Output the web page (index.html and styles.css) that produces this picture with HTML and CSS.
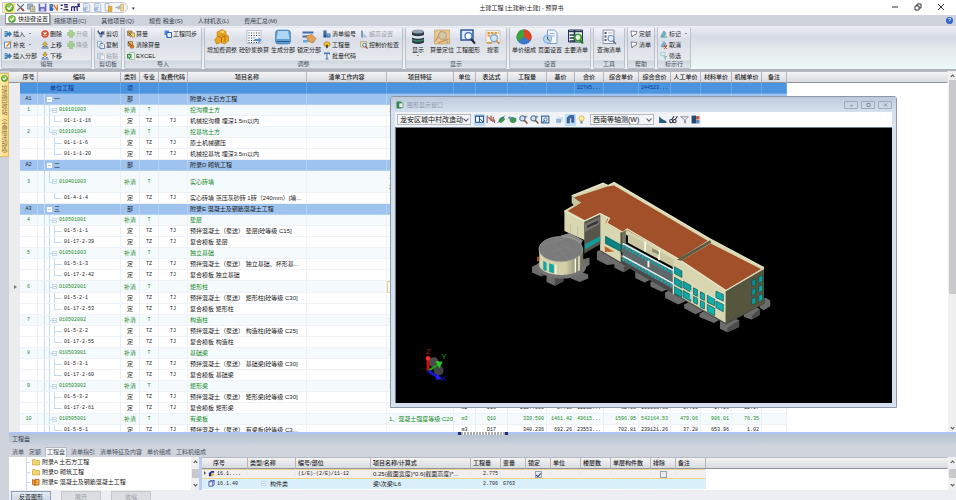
FILE: index.html
```html
<!DOCTYPE html>
<html lang="zh-CN">
<head>
  <meta charset="UTF-8">
  <meta name="viewport" content="width=device-width, initial-scale=1.0">
  <title>土建工程 [土建新\土建] - 预算书</title>
  <link rel="stylesheet" href="styles.css">
  <script src="grid.js" defer></script>
</head>
<body>
<!-- icon sprite -->
<svg class="sprite" aria-hidden="true">
  <symbol id="i-ok" viewBox="0 0 16 16"><circle cx="8" cy="8" r="7.5" fill="#4a9a2c"/><circle cx="8" cy="7" r="5.5" fill="#8cc850"/><path d="M4 8l3 3 5-6" fill="none" stroke="#fff" stroke-width="2.4"/></symbol>
  <symbol id="i-tools" viewBox="0 0 16 16"><path d="M2 2l12 12M14 2L2 14" stroke="#66707c" stroke-width="2.4"/><path d="M9 9l5 5" stroke="#b0483c" stroke-width="3"/></symbol>
  <symbol id="i-pages" viewBox="0 0 16 16"><path d="M1 2h9v9H1z" fill="#9fb9d6" stroke="#54708f"/><path d="M6 6h8v9H6z" fill="#f1e2b0" stroke="#7c6a3a"/><path d="M8 9h5M8 12h5" stroke="#3a6fb0"/></symbol>
  <symbol id="i-save" viewBox="0 0 16 16"><path d="M1 1h14v14H1z" fill="#6a70c8"/><path d="M4 1h8v6H4z" fill="#f4f5ff"/><path d="M5 10h6v5H5z" fill="#c9cdee"/></symbol>
  <symbol id="i-sum" viewBox="0 0 16 16"><path d="M1 2h6v12H1z" fill="#2e5fb0"/><path d="M8 3l7 10M15 3v11" stroke="#d07a2c" stroke-width="2.4"/><path d="M3 4l7 8" stroke="#7fb2e8" stroke-width="2"/></symbol>
  <symbol id="i-dots" viewBox="0 0 16 16"><path d="M1 4h4M7 3h7M1 10h3M6 12h9M8 7h6" stroke="#3a2f6a" stroke-width="2.6"/></symbol>
  <symbol id="i-m2" viewBox="0 0 16 16"><path d="M1 14V6M1 8q3-3 5 0v6M6 8q3-3 5 0v6M11 2h4l-3 4h4" fill="none" stroke="#26287e" stroke-width="2.2"/></symbol>
  <symbol id="i-doc" viewBox="0 0 16 16"><path d="M3 1h8l3 3v11H3z" fill="#eef4fc" stroke="#7f9cc4"/><path d="M5 5h6M5 8h6M5 11h6" stroke="#8aa6cc"/><circle cx="5" cy="11" r="3.4" fill="#9fb8d8"/></symbol>
  <symbol id="i-gold" viewBox="0 0 16 16"><path d="M2 1h7v13H2z" fill="#eef2f8" stroke="#8b96a8"/><path d="M8 6h6v9H8z" fill="#f0b52a" stroke="#b87c10"/></symbol>
  <symbol id="i-exit" viewBox="0 0 16 16"><path d="M10 2h5v12h-5z" fill="#f3d68a" stroke="#c2a04c"/><path d="M1 8h7M6 5l3 3-3 3" fill="none" stroke="#a6b2c6" stroke-width="2.4"/></symbol>
  <symbol id="i-insert" viewBox="0 0 16 16"><path d="M1 2h6v12H1z" fill="#5c88b8"/><path d="M5 5h5V2l6 6-6 6v-3H5z" fill="#2f7bc0"/><path d="M1 5h5M1 9h4" stroke="#dbe9f7"/></symbol>
  <symbol id="i-edit" viewBox="0 0 16 16"><path d="M1 2h12v12H1z" fill="#f8fbff" stroke="#3c6a9c" stroke-width="1.5"/><path d="M5 11L14 1" stroke="#d98b2b" stroke-width="3"/></symbol>
  <symbol id="i-del" viewBox="0 0 16 16"><circle cx="8" cy="8" r="7.5" fill="#d8502c"/><path d="M5 5l6 6M11 5l-6 6" stroke="#fff" stroke-width="2.4"/></symbol>
  <symbol id="i-up" viewBox="0 0 16 16"><path d="M8 1l5 6h-3v4H6V7H3z" fill="#e0b348" stroke="#8a6a2c"/><path d="M1 14h14M3 11h3M10 11h3" stroke="#3a6cab" stroke-width="2.2"/></symbol>
  <symbol id="i-down" viewBox="0 0 16 16"><path d="M8 10L3 5h3V1h4v4h3z" fill="#e0b348" stroke="#8a6a2c"/><path d="M1 14h14M3 11h3M10 11h3" stroke="#3a6cab" stroke-width="2.2"/></symbol>
  <symbol id="i-plus" viewBox="0 0 16 16"><path d="M5 1h6v4h4v6h-4v4H5v-4H1V5h4z" fill="#a5cf90" stroke="#86b872"/></symbol>
  <symbol id="i-cut" viewBox="0 0 16 16"><path d="M2 1l3 8M1 3l8 6" stroke="#3e5874" stroke-width="2.2"/><circle cx="11" cy="6" r="3.4" fill="#2c4a6c"/><circle cx="8" cy="12" r="3" fill="#5f86b2"/><path d="M14 2v8" stroke="#88a" stroke-width="2"/></symbol>
  <symbol id="i-copy" viewBox="0 0 16 16"><path d="M1 1h8v11H1z" fill="#eef4fb" stroke="#4a76ac"/><path d="M6 5h6l3 3v7H6z" fill="#fff" stroke="#3b68a4" stroke-width="1.5"/><path d="M8 9h4M8 12h5" stroke="#6b93c6"/></symbol>
  <symbol id="i-paste" viewBox="0 0 16 16"><path d="M1 2h10v12H1z" fill="#c7d4e2" stroke="#9db2c6"/><path d="M7 6h8v9H7z" fill="#eef4f9" stroke="#a5b6c9"/></symbol>
  <symbol id="i-calc" viewBox="0 0 16 16"><path d="M1 2h9v9H1z" fill="#e9a33b" stroke="#5b4a32"/><path d="M6 6h9v8H6z" fill="#f7d46c" stroke="#7a5a20"/><path d="M3 5l6 6" stroke="#35557e" stroke-width="2"/></symbol>
  <symbol id="i-clear" viewBox="0 0 16 16"><path d="M2 1h9v9H2z" fill="#f0a83a" stroke="#6a4a1a"/><circle cx="10" cy="11" r="4.4" fill="#c8742a"/><path d="M2 2l6 7" stroke="#31425c" stroke-width="2"/></symbol>
  <symbol id="i-excel" viewBox="0 0 16 16"><path d="M5 1h10v14H5z" fill="#eef8ea" stroke="#6a9a5c"/><path d="M0 4h9v9H0z" fill="#2f8a3a"/><path d="M2 6l5 5M7 6l-5 5" stroke="#fff" stroke-width="1.6"/></symbol>
  <symbol id="i-sync" viewBox="0 0 16 16"><path d="M1 1h9v9H1z" fill="#4d86d6"/><path d="M6 5h9v10H6z" fill="#f1f7ff" stroke="#2f66bc" stroke-width="2"/><path d="M4 13l4 2-3-5z" fill="#2f66bc"/></symbol>
  <symbol id="i-num" viewBox="0 0 16 16"><path d="M1 1h6v14H1z" fill="#1f4e86"/><path d="M7 7h8v8H7z" fill="#3d78b8"/><path d="M3 4h2M3 8h2M9 10h4" stroke="#e7f1fb" stroke-width="1.5"/></symbol>
  <symbol id="i-qty" viewBox="0 0 16 16"><path d="M8 1l6 3v5l-6 3-6-3V4z" fill="#f3c233" stroke="#7b5c10"/><path d="M6 8v7l4-2V7z" fill="#5a4a2a"/></symbol>
  <symbol id="i-text" viewBox="0 0 16 16"><path d="M2 1h12v4h-2V4H9v9h2v2H5v-2h2V4H4v1H2z" fill="#3f79b8"/></symbol>
  <symbol id="i-limit" viewBox="0 0 16 16"><path d="M2 1h4v14H2z" fill="#7f9dbd"/><path d="M7 6l7 9H7z" fill="#a7bcd2"/></symbol>
  <symbol id="i-check" viewBox="0 0 16 16"><path d="M1 1h12v11H1z" fill="#f4e3b6" stroke="#9a8050"/><circle cx="9" cy="8" r="3.6" fill="#dcecfa" stroke="#3a6aa4" stroke-width="1.6"/><path d="M11 11l4 4" stroke="#b04c2c" stroke-width="2.4"/></symbol>
  <symbol id="i-book" viewBox="0 0 16 16"><path d="M2 2l12 1-2 6-5 1-3 4-1-5z" fill="#fff" stroke="#4c5462" stroke-width="1.4"/></symbol>
  <symbol id="i-mark" viewBox="0 0 16 16"><path d="M2 12L8 2l4 5-4 6z" fill="#6fb3c4" stroke="#3a7f96"/><path d="M1 14h13" stroke="#5aa0a8" stroke-width="2.4"/></symbol>
  <symbol id="i-unmark" viewBox="0 0 16 16"><path d="M2 11L8 1l4 5-4 6z" fill="#7fb6cc" stroke="#3a7f96"/><path d="M8 9l6 6M14 9l-6 6" stroke="#cc3a2c" stroke-width="2.2"/></symbol>
  <symbol id="i-filter" viewBox="0 0 16 16"><path d="M1 1h9v6H1z" fill="#d8ecf0" stroke="#89b4be"/><path d="M6 8h9l-3 3v4h-3v-4z" fill="#8ac2cc"/></symbol>
  <symbol id="b-cubes" viewBox="0 0 32 32"><path d="M16 1l8 4v6l5 3v10l-8 6-7-3-9 3-4-9 5-4V6z" fill="#eba520" stroke="#a46a08"/><path d="M8 14l7 3v9M15 17l7-4M22 13v12M16 6v7" fill="none" stroke="#b0700c" stroke-width="2"/><path d="M12 5l6-2 4 3-6 3z" fill="#ffdb73"/></symbol>
  <symbol id="b-table" viewBox="0 0 32 32"><path d="M2 3h28v26H2z" fill="#fafcff" stroke="#8a93a6"/><path d="M5 8h22M5 13h22M5 18h12M5 23h12M5 27h22" stroke="#33415e" stroke-width="2" stroke-dasharray="2 3"/><path d="M17 20h8v-4l6 6-6 6v-4h-8z" fill="#4a8fe0"/></symbol>
  <symbol id="b-box" viewBox="0 0 32 32"><rect x="1" y="2" width="30" height="28" rx="6" fill="#5b9fd6" stroke="#2a5f96"/><path d="M6 4h20l3 16H3z" fill="#b0d6f2"/><path d="M3 25h26" stroke="#26588c" stroke-width="2"/></symbol>
  <symbol id="b-lock" viewBox="0 0 32 32"><path d="M3 5h22v4H3zM3 13h14v4H3z" fill="#3e6fae"/><path d="M10 14l12-3 8 8-6 9-9-3z" fill="#e2a05a" stroke="#a0622a"/><path d="M4 22h10v5H4z" fill="#6aaadc"/></symbol>
  <symbol id="b-barrel" viewBox="0 0 32 32"><path d="M4 5h24v22q-12 6-24 0z" fill="#2e3a44"/><ellipse cx="16" cy="5" rx="12" ry="4" fill="#8fa0ac"/><path d="M4 12q12 5 24 0v5q-12 5-24 0z" fill="#dfe9ee"/><path d="M4 20q12 5 24 0v3q-12 5-24 0z" fill="#2f8a6c"/></symbol>
  <symbol id="b-map" viewBox="0 0 32 32"><path d="M1 2h30v28H1z" fill="#e9c78e" stroke="#a98a58"/><path d="M3 24L14 4M8 28L29 20" stroke="#d07c3a" stroke-width="2"/><circle cx="17" cy="13" r="8" fill="#cfc6b4" fill-opacity=".8" stroke="#b3a184" stroke-width="2"/><path d="M22 20l6 8" stroke="#b3a184" stroke-width="3"/></symbol>
  <symbol id="b-find" viewBox="0 0 32 32"><path d="M2 2h24v20H2z" fill="#dcebf8" stroke="#2e5b96" stroke-width="3"/><circle cx="17" cy="14" r="7" fill="#f4faff" stroke="#3c6faa" stroke-width="2.5"/><path d="M22 20l8 9" stroke="#202a3a" stroke-width="4"/></symbol>
  <symbol id="b-seek" viewBox="0 0 32 32"><path d="M2 3h28v24H2z" fill="#f7efe2" stroke="#b9a98c"/><path d="M5 8h22M5 13h8" stroke="#e39a3c" stroke-width="4" stroke-dasharray="5 2"/><circle cx="18" cy="18" r="7" fill="#cfe4f7" stroke="#7aa3cf" stroke-width="2.5"/><path d="M23 23l6 7M4 28h10" stroke="#d98a30" stroke-width="3"/></symbol>
  <symbol id="b-pie" viewBox="0 0 32 32"><circle cx="16" cy="16" r="15" fill="#3a78cc"/><path d="M16 16L16 1A15 15 0 0 0 4 25z" fill="#3da23c"/><path d="M16 16V1A15 15 0 0 1 29 24z" fill="#dc4526"/></symbol>
  <symbol id="b-page" viewBox="0 0 32 32"><path d="M11 2h14l5 5v22H11z" fill="#f5f9fe" stroke="#7f9fc8" stroke-width="2"/><path d="M15 9h10M15 14h11" stroke="#8db0dc" stroke-width="2"/><circle cx="11" cy="20" r="8" fill="#b9d7f2" stroke="#8ab0da" stroke-width="2.4"/><path d="M11 15v5l4 3" fill="none" stroke="#345" stroke-width="2"/></symbol>
  <symbol id="b-list" viewBox="0 0 32 32"><path d="M1 2h28v24H1z" fill="#fff" stroke="#1f3552" stroke-width="2"/><path d="M1 5h28M3 12h10M3 18h10M3 24h10M13 2v24" stroke="#1f3552" stroke-width="3.4"/><circle cx="20" cy="17" r="6.5" fill="#e4f6dc" stroke="#3c9a34" stroke-width="3.4"/><path d="M24 22l6 7" stroke="#2c7a28" stroke-width="4"/></symbol>
  <symbol id="b-query" viewBox="0 0 32 32"><path d="M4 2h22v27H4z" fill="#f4f6f9" stroke="#8a94a4" stroke-width="2"/><path d="M7 8h4M7 15h4M7 22h4" stroke="#4b5a70" stroke-width="4"/><path d="M14 8h9M14 13h6" stroke="#b0b9c6" stroke-width="2"/><circle cx="20" cy="19" r="6" fill="#dfeefa" stroke="#7797b8" stroke-width="2.4"/><path d="M24 24l6 6" stroke="#59708c" stroke-width="3"/></symbol>
  <symbol id="v-pane" viewBox="0 0 16 16"><path d="M1 2h14v11H1zM8 2v11" fill="#f2f8ff" stroke="#27518a" stroke-width="1.8"/><path d="M9 7l5 5" stroke="#333" stroke-width="1.6"/></symbol>
  <symbol id="v-move" viewBox="0 0 16 16"><path d="M2 1v13M9 1v8h6v5" fill="none" stroke="#8a5a5a" stroke-width="2"/><path d="M4 4l9 8M13 3v5" stroke="#c0504a" stroke-width="2.2"/></symbol>
  <symbol id="v-orbit" viewBox="0 0 16 16"><path d="M3 10q1-7 9-7l2 4q-3 7-9 7z" fill="#3f9a44"/><path d="M1 14L14 1" stroke="#365c9a" stroke-width="1.6"/></symbol>
  <symbol id="v-globe" viewBox="0 0 16 16"><ellipse cx="9" cy="9" rx="6" ry="5" fill="#3c9650"/><path d="M1 5h9M1 5l3-3M1 5l3 3" fill="none" stroke="#4872b0" stroke-width="1.6"/></symbol>
  <symbol id="v-zoom" viewBox="0 0 16 16"><circle cx="6" cy="6" r="4.6" fill="#cfe2f4" stroke="#4c6c94" stroke-width="1.8"/><path d="M9 9l6 6" stroke="#7a4a2a" stroke-width="2.4"/><path d="M12 1v5M10 3h5" stroke="#456"/></symbol>
  <symbol id="v-fit" viewBox="0 0 16 16"><path d="M1 2h13v12H1z" fill="#e4eff9" stroke="#3e6a9c" stroke-width="2"/><circle cx="8" cy="8" r="3" fill="#fff" stroke="#3e6a9c" stroke-width="1.6"/><path d="M3 13l4-4" stroke="#3e6a9c" stroke-width="2"/></symbol>
  <symbol id="v-cube" viewBox="0 0 16 16"><path d="M2 7h9v7H2z" fill="#8fb4d8"/><path d="M2 7l3-3h9v7l-3 3V7z" fill="#c9deef"/></symbol>
  <symbol id="v-solid" viewBox="0 0 16 16"><path d="M2 5l4-4h8v12h-4V5H6v9H2z" fill="#3a68a6" stroke="#1f3f70"/></symbol>
  <symbol id="v-bulb" viewBox="0 0 16 16"><circle cx="8" cy="6" r="4.6" fill="#ffefa0" stroke="#b49a3a"/><path d="M6 11h4v4H6z" fill="#7d7d88"/></symbol>
  <symbol id="v-hill" viewBox="0 0 16 16"><path d="M2 2l5 5 8 4v3H2z" fill="#2a5c7e"/></symbol>
  <symbol id="v-glass" viewBox="0 0 16 16"><path d="M5 8l4-6M11 8l4-6" stroke="#334" stroke-width="1.8"/><circle cx="4" cy="11" r="2.8" fill="none" stroke="#334" stroke-width="1.8"/><circle cx="10" cy="11" r="2.8" fill="none" stroke="#334" stroke-width="1.8"/></symbol>
  <symbol id="v-funnel" viewBox="0 0 16 16"><path d="M1 3h14l-5 5v6H8V8z" fill="#e9edf2" stroke="#7b8794" stroke-width="1.4"/></symbol>
  <symbol id="v-split" viewBox="0 0 16 16"><path d="M1 1h8v14H1z" fill="#234a72"/><path d="M9 2h6v6H9z" fill="#c4583a"/><path d="M9 9h6v6H9z" fill="#5b85b0"/></symbol>
  <symbol id="i-folder" viewBox="0 0 16 16"><path d="M1 3h5l2 2h7v9H1z" fill="#f5d469" stroke="#b98f2c"/></symbol>
  <symbol id="i-openf" viewBox="0 0 16 16"><path d="M1 3l5 2v10l-5-2zM6 3h8v11H6z" fill="#f6b13c" stroke="#b4521c" stroke-width="1.6"/></symbol>
</svg>

<header class="titlebar">
  <div class="qat">
    <button class="hot" aria-label="快捷键设置"><svg><use href="#i-ok"/></svg></button>
    <button aria-label="工具"><svg><use href="#i-tools"/></svg></button>
    <button aria-label="复制页"><svg><use href="#i-pages"/></svg></button>
    <button aria-label="保存"><svg><use href="#i-save"/></svg></button>
    <button aria-label="汇总"><svg><use href="#i-sum"/></svg></button>
    <button aria-label="小数"><svg><use href="#i-dots"/></svg></button>
    <button aria-label="单位"><svg><use href="#i-m2"/></svg></button>
    <button aria-label="文档"><svg><use href="#i-doc"/></svg></button>
    <button aria-label="报表"><svg><use href="#i-doc"/></svg></button>
    <button aria-label="锁定"><svg><use href="#i-gold"/></svg></button>
    <button aria-label="退出"><svg><use href="#i-exit"/></svg></button>
  </div>
  <span class="qat-more">▾</span>
  <h1>土建工程 [土建新\土建] - 预算书</h1>
  <div class="winctl">
    <button aria-label="最小化"><svg viewBox="0 0 8 8"><path d="M1 4h6"/></svg></button>
    <button aria-label="还原"><svg viewBox="0 0 8 8"><path d="M1 3h4v4H1zM3 3V1h4v4H5"/></svg></button>
    <button aria-label="关闭"><svg viewBox="0 0 8 8"><path d="M1 1l6 6M7 1L1 7"/></svg></button>
  </div>
  <div class="tip"><svg><use href="#i-ok"/></svg>快捷键设置</div>
</header>

<nav class="menu">
  <a href="#">措施项目(C)</a>
  <a href="#">其他项目(Q)</a>
  <a href="#">规费 税金(S)</a>
  <a href="#">人材机表(L)</a>
  <a href="#">费用汇总(M)</a>
  <button class="help" aria-label="帮助">?</button>
</nav>

<div class="ribbon">
  <section class="group">
    <div class="tools">
      <div class="col w37">
        <button><svg><use href="#i-insert"/></svg>插入<i class="arr"></i></button>
        <button><svg><use href="#i-edit"/></svg>补充<i class="arr"></i></button>
        <button><svg><use href="#i-insert"/></svg>插入分部</button>
      </div>
      <div class="col w26">
        <button><svg><use href="#i-del"/></svg>删除</button>
        <button><svg><use href="#i-up"/></svg>上移</button>
        <button><svg><use href="#i-down"/></svg>下移</button>
      </div>
      <div class="col w24">
        <button disabled><svg><use href="#i-plus"/></svg>升级</button>
        <button disabled><svg><use href="#i-plus"/></svg>降级</button>
      </div>
    </div>
    <h2>编辑</h2>
  </section>
  <section class="group">
    <div class="tools">
      <div class="col w24">
        <button><svg><use href="#i-cut"/></svg>剪切</button>
        <button><svg><use href="#i-copy"/></svg>复制</button>
        <button disabled><svg><use href="#i-paste"/></svg>粘贴</button>
      </div>
    </div>
    <h2>剪切板</h2>
  </section>
  <section class="group">
    <div class="tools">
      <div class="col w37">
        <button><svg><use href="#i-calc"/></svg>算量</button>
        <button><svg><use href="#i-clear"/></svg>清除算量</button>
        <button><svg><use href="#i-excel"/></svg>EXCEL</button>
      </div>
      <div class="col w37">
        <button><svg><use href="#i-sync"/></svg>工程同步</button>
      </div>
    </div>
    <h2>导入</h2>
  </section>
  <section class="group">
    <div class="tools">
      <button class="big w32"><svg><use href="#b-cubes"/></svg>增加费调整</button>
      <button class="big w32"><svg><use href="#b-table"/></svg>砼砂浆换算</button>
      <button class="big w26"><svg><use href="#b-box"/></svg>生成分部</button>
      <button class="big w26"><svg><use href="#b-lock"/></svg>锁定分部</button>
      <div class="col w37">
        <button><svg><use href="#i-num"/></svg>清单编号</button>
        <button><svg><use href="#i-qty"/></svg>工程量</button>
        <button><svg><use href="#i-text"/></svg>批量代码</button>
      </div>
      <div class="col w42">
        <button disabled><svg><use href="#i-limit"/></svg>超高设置</button>
        <button><svg><use href="#i-check"/></svg>控制价检查</button>
      </div>
    </div>
    <h2>调整</h2>
  </section>
  <section class="group">
    <div class="tools">
      <button class="big w22"><svg><use href="#b-barrel"/></svg>显示<i class="arr"></i></button>
      <button class="big w26"><svg><use href="#b-map"/></svg>算量定位</button>
      <button class="big w26"><svg><use href="#b-find"/></svg>工程图形</button>
      <button class="big w24"><svg><use href="#b-seek"/></svg>搜索</button>
    </div>
    <h2>显示</h2>
  </section>
  <section class="group">
    <div class="tools">
      <button class="big w26"><svg><use href="#b-pie"/></svg>单价组成</button>
      <button class="big w26"><svg><use href="#b-page"/></svg>页面设置</button>
      <button class="big w26"><svg><use href="#b-list"/></svg>主要清单</button>
    </div>
    <h2>设置</h2>
  </section>
  <section class="group">
    <div class="tools">
      <button class="big w28"><svg><use href="#b-query"/></svg>查询清单</button>
    </div>
    <h2>工具</h2>
  </section>
  <section class="group">
    <div class="tools">
      <div class="col w24">
        <button><svg><use href="#i-book"/></svg>定额</button>
        <button><svg><use href="#i-book"/></svg>清单</button>
      </div>
    </div>
    <h2>帮助</h2>
  </section>
  <section class="group">
    <div class="tools">
      <div class="col w30">
        <button><svg><use href="#i-mark"/></svg>标记<i class="arr"></i></button>
        <button><svg><use href="#i-unmark"/></svg>取消</button>
        <button><svg><use href="#i-filter"/></svg>筛选</button>
      </div>
    </div>
    <h2>标示行</h2>
  </section>
</div>

<main class="work">
  <aside class="side">
    <button class="side-tab"><svg><use href="#i-ok"/></svg>垃圾回收站（全屏浮动区）</button>
  </aside>
  <div class="sheet">
    <table class="grid" id="grid">
      <colgroup id="cols"></colgroup>
      <thead><tr id="head"></tr></thead>
      <tbody id="rows"></tbody>
    </table>
  </div>
  <div class="vscroll"><i class="chev up"></i><span class="thumb tall"></span><i class="chev"></i></div>

  <!-- floating 3D view -->
  <section class="viewer">
    <div class="viewer-title">
      <svg viewBox="0 0 16 16"><path d="M1 1h10v14H1z" fill="#2c8a4a"/><path d="M6 4h8v9H6z" fill="#e5f2e8" stroke="#2c6a44"/></svg>
      <span>图形显示窗口</span>
      <button aria-label="最小化"><svg viewBox="0 0 8 8"><path d="M2 5h4"/></svg></button>
      <button aria-label="最大化"><svg viewBox="0 0 8 8"><path d="M2 2h4v4H2z"/></svg></button>
      <button aria-label="关闭"><svg viewBox="0 0 8 8"><path d="M2 2l4 4M6 2L2 6"/></svg></button>
    </div>
    <div class="viewer-bar">
      <label class="pick project"><select aria-label="工程"><option>龙安区城中村改造动</option></select></label>
      <div class="vtools">
        <button class="on" aria-label="窗格"><svg><use href="#v-pane"/></svg></button>
        <button aria-label="平移"><svg><use href="#v-move"/></svg></button>
        <button aria-label="旋转"><svg><use href="#v-orbit"/></svg></button>
        <button aria-label="环绕"><svg><use href="#v-globe"/></svg></button>
        <button aria-label="缩放"><svg><use href="#v-zoom"/></svg></button>
        <button aria-label="放大"><svg><use href="#v-zoom"/></svg></button>
        <button aria-label="全图"><svg><use href="#v-fit"/></svg></button>
      </div>
      <div class="vtools">
        <button aria-label="线框"><svg><use href="#v-cube"/></svg></button>
        <button class="on" aria-label="实体"><svg><use href="#v-solid"/></svg></button>
        <button aria-label="灯光"><svg><use href="#v-bulb"/></svg></button>
      </div>
      <label class="pick view"><select aria-label="视角"><option>西南等轴测(W)</option></select></label>
      <div class="vtools">
        <button aria-label="地形"><svg><use href="#v-hill"/></svg></button>
        <button aria-label="查看"><svg><use href="#v-glass"/></svg></button>
        <button aria-label="过滤"><svg><use href="#v-funnel"/></svg></button>
        <button aria-label="分屏"><svg><use href="#v-split"/></svg></button>
      </div>
    </div>
    <div class="scene">
      <svg viewBox="0 0 1497 831" preserveAspectRatio="xMidYMid meet">
        <defs>
          <linearGradient id="drum"><stop offset="0" stop-color="#d9d6ae"/><stop offset=".6" stop-color="#d2cfa8"/><stop offset="1" stop-color="#6e6c56"/></linearGradient>
          <linearGradient id="glass" x2="1" y2="1"><stop offset="0" stop-color="#0a7f80"/><stop offset="1" stop-color="#12b8b4"/></linearGradient>
        </defs>
        <g transform="translate(378 129)">
          <!-- footings -->
          <g fill="#6c6c6c">
            <path d="M32 290l28-14 26 12v22l-26 10-28-12zM76 316l25-12 26 10v20l-26 14-25-12zM150 316l26-12 26 10v12l-26 10-26-10zM184 268l22-6v22l-22 14z"/>
            <path d="M228 244l30-14 75 40v22l-24 15-28-14v-10l-22 2-31-16zM344 304l24-12 30 16v18l-26 12-28-14zM390 336l24-12 44 24-4 6-30 12-34-16zM434 368l24-12 40 20v18l-24 10-40-20zM492 404l24-12 32 20v12l-22 10-34-18zM538 432l20-12 44 20v8l-20 12-44-18zM600 456l30-16 28 12v20l-36 16-22-10zM672 424l30-16 18 10v18l-24 14-24-8zM722 392l16-8 14 8v18l-20 12-12-8z"/>
          </g>
          <path d="M240 225l378 224 118-62v14l-118 64-378-220z" fill="#4a4a4a"/>
          <path d="M60 276l26 12v22l-26 10zM101 326l26-12v20l-26 14zM622 476l36-24v20l-36 16zM696 438l24-20v18l-24 14zM309 292l24-15v15l-24 15z" fill="#4b4b4b"/>
          <!-- walls -->
          <path d="M152 76l95-38 15 7 18-9 288 169 165 88-115 67v100l-160-92v-98l-140-76-18-8v90l-62-36v-110l-46 20v60l-62-28v-62l48-28-26-16z" fill="#d9d7b1"/>
          <path d="M618 362l115-67v105l-116 60z" fill="#56563f"/>
          <path d="M190 152l48-22v92l-48 28z" fill="#55554a"/>
          <path d="M190 162l46-22v22l-46 24z" fill="#77776f"/><path d="M198 166l34-16v8l-34 16z" fill="#35353a"/>
          <path d="M192 222l46-24v14l-46 26z" fill="#109a9c"/>
          <!-- roofs -->
          <path d="M160 80l100-32 20-3 283 167-88 54-155-86-12 8-54-30 8-16-24-14-46 22-52-28 40-26z" fill="#a2502a"/>
          <path d="M482 272l90-52 152 77-106 64z" fill="#a2502a"/>
          <path d="M152 76l95-38 15 7 18-9 288 169 165 88M130 122l60 30 48-22 28 14-8 14 48 28 14-10 156 92 142 94 115-67" fill="none" stroke="#e6e4c6" stroke-width="4"/>
          <path d="M470 268l100-58 4 8-92 54z" fill="#5b5b44"/>
          <path d="M302 186l14-6v60l-14 8z" fill="#74735a"/><path d="M152 76v22l10 10 18-12z" fill="#c9c7a0"/>
          <!-- corridor -->
          <path d="M305 214l155 86v58l-155-86z" fill="#5f6868"/>
          <path d="M322 190l138 78v24l-138-74z" fill="#c9c8a2"/>
          <path d="M306 220l154 82M306 258l154 84" stroke="#e8f0f0" stroke-width="5"/>
          <path d="M306 228l154 82M306 266l154 84" stroke="#17a0a6" stroke-width="10" stroke-dasharray="7 4"/>
          <path d="M374 214v30M416 240v30M384 272v20" stroke="#f4f4e4" stroke-width="6"/>
          <path d="M395 234l20 10v10l-20-10z" fill="#8d8b68"/>
          <path d="M252 228l28 16-28 2z" fill="#c0602c"/>
          <!-- windows -->
          <g fill="url(#glass)" stroke="#0a4f54" stroke-width="2">
            <path d="M254 198l46 26v20l-46-24zM462 290l23 13v20l-23-13zM462 322l23 13v20l-23-13zM462 350l23 13v20l-23-13zM489 334l23 13v20l-23-13zM489 362l23 13v20l-23-13zM520 354l12 6v20l-12-6zM541 366l12 6v20l-12-6zM520 380l12 6v18l-12-6zM541 392l12 6v20l-12-6zM562 374l22 12v22l-22-10zM562 404l22 12v22l-22-12zM588 364l22 10v20l-22-10zM588 394l22 10v22l-22-12z"/>
            <path d="M696 332l12-6v18l-12 6zM717 322l12-6v18l-12 6zM696 360l12-6v18l-12 6zM717 350l12-6v18l-12 6zM696 388l12-6v18l-12 6zM717 378l12-6v18l-12 6z"/>
          </g>
          <path d="M459 290v84M560 372l54 30M512 362v26" stroke="#eef4ec" stroke-width="3"/>
          <path d="M170 168v42M148 160v34" stroke="#b9b791" stroke-width="2"/>
          <!-- round hall -->
          <ellipse cx="122" cy="290" rx="74" ry="36" fill="#747474"/>
          <path d="M54 240v48q12 26 66 27 56-1 67-31v-50z" fill="url(#drum)"/>
          <path d="M66 272l10 6v26l-10-5zM84 280l14 4v26l-14-4z" fill="#11a5a4"/><path d="M104 284v28M163 262v46M174 258v44" stroke="#f6f6ea" stroke-width="4"/>
          <path d="M50 260v14" stroke="#c0602c" stroke-width="5"/>
          <path d="M118 196l28-8 40 22-10 20z" fill="#8a8a8a"/>
          <ellipse cx="119" cy="237" rx="66" ry="38" fill="#7b7b7b" stroke="#a9a9a0" stroke-width="2"/>
          <path d="M62 224l70-20M86 246l60-18M90 212l50 54M120 222l44 28" stroke="#868686" stroke-width="2"/>
        </g>
        <!-- axis gizmo -->
        <g transform="translate(88 690)">
          <circle cx="25" cy="18" r="15" fill="#4a4a4a"/><circle cx="40" cy="43" r="15" fill="#424242"/>
          <path d="M8 44V10" stroke="#c01414" stroke-width="9"/><circle cx="8" cy="6" r="7" fill="#f03030"/>
          <path d="M12 42l30-20" stroke="#1e9a1e" stroke-width="7"/><path d="M30 14l22 2-10 20z" fill="#2fc42f"/>
          <path d="M8 44l32 20" stroke="#1414c8" stroke-width="9"/><path d="M36 54l16 16-22 0z" fill="#2222ee"/>
          <text x="1" y="-8" fill="#b01818">Z</text><text x="48" y="8" fill="#1fae1f">Y</text><text x="48" y="74" fill="#1818b4">X</text>
        </g>
      </svg>
    </div>
  </section>
</main>

<section class="panel">
  <i class="grip"></i>
  <h2 class="panel-title">工程盘</h2>
  <nav class="tabs">
    <button>清单</button>
    <button>定额</button>
    <button class="active">工程盘</button>
    <button>清单指引</button>
    <button>清单特征及内容</button>
    <button>单价组成</button>
    <button>工料机组成</button>
  </nav>
  <div class="split">
    <ul class="tree">
      <li><svg><use href="#i-folder"/></svg>附录A 土石方工程</li>
      <li><svg><use href="#i-folder"/></svg>附录D 砌筑工程</li>
      <li><svg><use href="#i-openf"/></svg>附录E 混凝土及钢筋混凝土工程</li>
    </ul>
    <div class="vscroll small"><i class="chev up"></i><span class="thumb"></span><i class="chev"></i></div>
    <div class="parts-wrap">
      <table class="parts">
        <colgroup>
          <col class="p46"><col class="p48"><col class="p75"><col class="p100"><col class="p30"><col class="p25"><col class="p25"><col class="p30"><col class="p30"><col class="p40"><col class="p25"><col class="p30"><col>
        </colgroup>
        <thead>
          <tr><th class="first">序号</th><th>类型/名称</th><th>编号/部位</th><th>项目名称/计算式</th><th>工程量</th><th>变量</th><th>锁定</th><th>单位</th><th>楼层数</th><th>单层构件数</th><th>排除</th><th>备注</th><th class="end"></th></tr>
        </thead>
        <tbody>
          <tr class="sel">
            <td class="lat"><i class="mark"></i><svg viewBox="0 0 16 16"><path d="M2 14V7l6-5h6v4H8v8z" fill="#1d2f9c"/><circle cx="11" cy="11" r="3.4" fill="#f0c030"/></svg>16.1....</td>
            <td></td><td class="lat">(1/E)-(2/E)/11-12</td><td>0.25{截面宽度}*0.6{截面高度}*...</td><td class="num lat">2.775</td><td></td>
            <td class="mid"><input type="checkbox" checked aria-label="锁定"></td><td></td><td></td><td></td>
            <td class="mid"><input type="checkbox" aria-label="排除"></td><td></td><td class="end"></td>
          </tr>
          <tr class="alt">
            <td class="lat"><i class="mark none"></i><svg viewBox="0 0 16 16"><path d="M2 4h9v10H2zM2 4l3-3h9v10l-3 3M11 4l3-3" fill="#e9ecff" stroke="#23309a" stroke-width="1.6"/></svg>16.1.40</td>
            <td class="kind"><i class="box"></i>构件类</td><td></td><td>梁\次梁\L6</td><td class="num lat">2.706</td><td class="lat">G763</td>
            <td></td><td></td><td></td><td></td><td></td><td></td><td class="end"></td>
          </tr>
        </tbody>
      </table>
    </div>
    <div class="vscroll small"><i class="chev up"></i><span class="thumb"></span><i class="chev"></i></div>
  </div>
  <div class="actions">
    <button>反查图形</button>
    <button disabled>展开</button>
    <button disabled>收缩</button>
  </div>
</section>
</body>
</html>
```

FILE: styles.css
```css
* { box-sizing: border-box; }
body {
  margin: 0;
  height: 100vh;
  display: flex;
  flex-direction: column;
  overflow: hidden;
  background: #cfd3dc;
  color: #222;
  font: 6px/8px "Liberation Sans", "Noto Sans CJK SC", sans-serif;
}
button {
  border: 0;
  padding: 0;
  background: none;
  color: inherit;
  font: inherit;
  white-space: nowrap;
}
h1, h2 { margin: 0; font: inherit; }
svg { flex: none; display: block; }
.sprite { position: absolute; width: 0; height: 0; }

/* title bar */
.titlebar {
  position: relative;
  display: flex;
  align-items: center;
  height: 15px;
  background: #fff;
}
.qat {
  display: flex;
  align-items: center;
  width: 126px;
  height: 11px;
  margin-left: 2px;
  padding-left: 1px;
  border: 1px solid #c6cad2;
  border-radius: 0 6px 6px 0;
  background: #f3f5f8;
}
.qat button { width: 11px; height: 10px; display: grid; place-items: center; }
.qat svg { width: 9px; height: 9px; }
.qat .hot { background: #fbe18a; }
.qat-more { margin-left: 4px; font-size: 5px; }
.titlebar h1 {
  position: absolute;
  left: 0;
  right: 0;
  padding-left: 87px;
  text-align: center;
  pointer-events: none;
}
.winctl { display: flex; gap: 15px; margin-left: auto; padding: 0 11px 2px 0; }
.winctl svg { width: 8px; height: 8px; fill: none; stroke: #333; stroke-width: 1; }
.tip {
  position: absolute;
  left: 5px;
  top: 13px;
  z-index: 5;
  display: flex;
  align-items: center;
  gap: 2px;
  height: 11px;
  padding: 0 1px 0 2px;
  white-space: nowrap;
  background: #fff;
  border: 1px solid #8f949c;
  box-shadow: 1px 1px 1px #7778;
}
.tip svg { width: 8px; height: 8px; }

/* menu */
.menu {
  display: flex;
  align-items: center;
  gap: 15px;
  height: 11px;
  padding: 0 3px 0 54px;
  background: #cdd2db;
}
.menu a { color: #3c4450; text-decoration: none; }
.help {
  width: 7px;
  height: 7px;
  margin-left: auto;
  border-radius: 50%;
  background: #2e62c4;
  color: #fff;
  line-height: 7px;
}

/* ribbon */
.ribbon {
  display: flex;
  gap: 2px;
  height: 45px;
  padding: 1px 0 0 1px;
  border-bottom: 2px solid #b0b4bc;
  background: linear-gradient(#eceff5, #d6dae5 25%, #e6ebee 60%, #eff8f8);
}
.group {
  display: flex;
  flex-direction: column;
  padding: 0 1px;
  border: 1px solid #bcc1ca;
  border-top-color: #e4e7ed;
  border-radius: 2px;
  background: linear-gradient(#f1f3f8, #dadee8 30%, #e6eaed 80%, #cfd6de 82%, #dfe4ea);
}
.tools { display: flex; flex: 1; }
.group h2 { height: 7px; line-height: 7px; text-align: center; color: #46505e; }
.col { display: flex; flex-direction: column; }
.col button { display: flex; align-items: center; gap: 1px; height: 11px; padding-left: 1px; }
.col svg { width: 8px; height: 8px; }
.ribbon button:disabled { color: #9ba1aa; }
.big { display: flex; flex-direction: column; align-items: center; gap: 1px; padding-top: 1px; }
.big svg { width: 16px; height: 16px; }
.arr {
  margin-left: 3px;
  border: 1px solid transparent;
  border-top-color: #333;
}
.big .arr { margin: 0; }
.w22 { width: 22px; }
.w24 { width: 24px; }
.w26 { width: 26px; }
.w28 { width: 28px; }
.w30 { width: 30px; }
.w32 { width: 32px; }
.w37 { width: 37px; }
.w42 { width: 42px; }

/* work area */
.work {
  position: relative;
  display: flex;
  flex: 1;
  min-height: 0;
}
.side { width: 9px; flex: none; padding-top: 2px; background: #cdd2dc; }
.side-tab {
  display: flex;
  align-items: center;
  gap: 3px;
  width: 9px;
  height: 84px;
  padding-top: 1px;
  border: 1px solid #e0bd62;
  border-left: 0;
  background: linear-gradient(90deg, #fdebb0, #fbd978);
  color: #857645;
  writing-mode: vertical-rl;
}
.side-tab svg { width: 7px; height: 7px; }
.sheet { flex: 1; overflow: hidden; background: linear-gradient(90deg, #ececee 11px, #fff 11px); }
.grid { width: 100%; table-layout: fixed; border-spacing: 0; }
.grid th, .parts th {
  height: 12px;
  padding: 0;
  overflow: hidden;
  white-space: nowrap;
  font-weight: 500;
  color: #222;
  background: linear-gradient(#f4f4f6, #d9dbe0);
  border-top: 1px solid #b6b9c0;
  border-bottom: 1px solid #8e939c;
  border-right: 1px solid #b4b7be;
}
.grid th.gut, .grid th.rest, .parts th.end { border-right-color: transparent; }
.grid td {
  height: 11px;
  padding: 0 2px;
  overflow: hidden;
  white-space: nowrap;
  line-height: 10px;
  border-right: 1px solid #eef2f6;
  border-bottom: 1px solid #eef2f6;
}
.grid td.gut { background: #ececee; border-color: #ececee; }
.grid td.rest { background: #fff; border-color: #fff; }
.grid .c { text-align: center; padding: 0; }
.grid .n { text-align: right; }
.grid .c.n1, .grid .n, .lat { font-family: "Liberation Mono", "Noto Sans CJK SC", monospace; font-size: 5px; }
.unit td { background: #4b94e0; border-color: #69a6e6; color: #0f3596; }
.part td { background: #9dc3ee; border-color: #b2d0f2; }
.item td { background: #f5fafd; color: #178a26; }
.high td { height: 22px; }
.grid .code { padding: 0 0 0 4px; }
.codebox { display: flex; align-items: center; height: 100%; min-height: 10px; }
.high .codebox { min-height: 21px; }
.unit .codebox { padding-left: 6px; }
.code .t { padding-left: 2px; }
.gd { width: 5px; align-self: stretch; margin-bottom: -1px; --ln: #c6dbf0; }
.gd.v { background: linear-gradient(var(--ln), var(--ln)) 2px 0 / 1px 100% no-repeat; }
.gd.tee { background: linear-gradient(var(--ln), var(--ln)) 2px 0 / 1px 100% no-repeat, linear-gradient(var(--ln), var(--ln)) 2px 50% / 3px 1px no-repeat; }
.gd.elb { background: linear-gradient(var(--ln), var(--ln)) 2px 0 / 1px 50% no-repeat, linear-gradient(var(--ln), var(--ln)) 2px 50% / 3px 1px no-repeat; }
.gd.h { background: linear-gradient(var(--ln), var(--ln)) 0 50% / 5px 1px no-repeat; }
.box {
  display: inline-block;
  width: 5px;
  height: 5px;
  border: 1px solid #c6dbf0;
  background: linear-gradient(#b4cfea, #b4cfea) 0 1px / 3px 1px no-repeat #fff;
}
.part .box { border-color: #fff; }
.cur {
  display: block;
  width: 0;
  margin-left: 3px;
  border: 2px solid transparent;
  border-left: 3px solid #777;
}
.grid td.focus { border: 1px solid #e9cf82; }

/* scroll bars */
.vscroll {
  display: flex;
  flex-direction: column;
  justify-content: space-between;
  align-items: center;
  width: 8px;
  flex: none;
  padding: 4px 0 3px;
  background: #f0f0f1;
}
.thumb { width: 7px; height: 9px; background: #c9c9cb; }
.thumb.tall { height: 214px; margin-bottom: auto; margin-top: 2px; }
.chev {
  width: 3px;
  height: 3px;
  border: solid #444;
  border-width: 0 1px 1px 0;
  transform: rotate(45deg);
}
.chev.up { transform: rotate(225deg); }

/* floating viewer */
.viewer {
  position: absolute;
  left: 390px;
  top: 25px;
  width: 507px;
  height: 312px;
  display: flex;
  flex-direction: column;
  padding: 0 4px 4px;
  border: 1px solid #8d99a8;
  border-radius: 3px 3px 0 0;
  background: #d5e1ee;
}
.viewer-title {
  display: flex;
  align-items: center;
  gap: 3px;
  height: 15px;
  margin: 0 -4px;
  padding: 1px 4px 0 5px;
  color: #8d99a8;
  background: linear-gradient(#bccbdc, #d5e1ee);
}
.viewer-title > svg { width: 8px; height: 8px; }
.viewer-title span { margin-right: auto; }
.viewer-title button {
  display: grid;
  place-items: center;
  width: 14px;
  height: 8px;
  border: 1px solid #9fabba;
  border-radius: 1px;
}
.viewer-title button svg { width: 7px; height: 6px; fill: none; stroke: #6b7785; }
.viewer-bar {
  display: flex;
  align-items: center;
  gap: 3px;
  height: 15px;
  padding-left: 2px;
  background: linear-gradient(90deg, #f1f2f5 306px, #fff 306px);
}
.pick { position: relative; }
.pick select {
  appearance: none;
  width: 100%;
  height: 11px;
  padding: 0 2px;
  border: 1px solid #b5bac2;
  border-radius: 0;
  background: #f4f5f7;
  color: #111;
  font: 7px/9px "Liberation Sans", "Noto Sans CJK SC", sans-serif;
}
.pick::after {
  content: "";
  position: absolute;
  right: 3px;
  top: 3px;
  width: 3px;
  height: 3px;
  border: solid #555;
  border-width: 0 1px 1px 0;
  transform: rotate(45deg);
}
.project { width: 74px; }
.view { width: 64px; }
.vtools { display: flex; }
.vtools button { display: grid; place-items: center; width: 11px; height: 12px; }
.vtools svg { width: 9px; height: 9px; }
.vtools .on { background: #bcdcf8; }
.scene { flex: 1; min-height: 0; background: #000; border: solid #6f7b88; border-width: 1px 0 0 1px; }
.scene svg { width: 100%; height: 100%; }
.scene text { font: 24px "Liberation Sans", sans-serif; }

/* bottom panel */
.panel {
  position: relative;
  margin-left: 9px;
  border-top: 2px solid #a9c4f5;
  background: #edeef4;
}
.grip {
  position: absolute;
  left: 449px;
  top: -2px;
  width: 50px;
  height: 3px;
  background: #fff;
  border: solid #1c2a80;
  border-width: 0 3px;
  background-image: repeating-linear-gradient(90deg, #aaa 0 2px, #fff 2px 3px);
}
.panel-title { height: 11px; padding: 1px 3px; line-height: 9px; color: #3a4452; background: linear-gradient(#b5c0d0, #ccd3de); }
.tabs { display: flex; align-items: center; gap: 3px; height: 12px; padding: 1px 2px 0; background: #d0d4dd; color: #4a525e; }
.tabs button { height: 10px; padding: 0 1px; }
.tabs .active { background: #f4f7fa; border: 1px solid #b4bac4; border-bottom: 0; }
.split { display: flex; height: 33px; }
.split .vscroll { padding: 4px 0; }
.tree {
  width: 182px;
  flex: none;
  margin: 0;
  padding: 0 0 2px 17px;
  list-style: none;
  background: linear-gradient(#c6dbf0, #c6dbf0) 17px 0 / 1px 100% no-repeat #fff;
  overflow: hidden;
}
.tree li { display: flex; align-items: center; gap: 2px; height: 10px; }
.tree li::before { content: ""; width: 4px; height: 1px; background: #c6dbf0; }
.tree svg { width: 8px; height: 8px; }
.parts-wrap { flex: 1; overflow: hidden; background: #fff; border-left: 3px solid #b7cdf2; }
.parts { width: 100%; table-layout: fixed; border-spacing: 0; }
.parts th { text-align: left; padding-left: 2px; }
.parts th.first { padding-left: 11px; }
.parts td {
  height: 10px;
  padding: 0 2px;
  overflow: hidden;
  white-space: nowrap;
  line-height: 8px;
  border-right: 1px solid #e3edf3;
}
.parts td svg { display: inline-block; width: 7px; height: 7px; margin-right: 2px; vertical-align: middle; }
.parts td.end { background: #fff; border: 0; }
.sel td { background: #f2efee; border-top: 1px solid #ecd48a; border-bottom: 1px solid #ecd48a; }
.alt td { background: #d9f0fa; }
.parts .num { text-align: right; }
.parts .mid { text-align: center; }
.parts .kind { padding-left: 13px; }
.kind .box { margin-right: 4px; }
.mark {
  display: inline-block;
  width: 4px;
  height: 4px;
  border: 2px solid transparent;
  border-left-color: #555;
}
.mark.none { border-left-color: transparent; }
.parts input {
  appearance: none;
  display: inline-block;
  width: 7px;
  height: 7px;
  margin: 0;
  border: 1px solid #9aa3ae;
  background: #e9ecf1;
  vertical-align: middle;
}
.parts input:checked::after {
  content: "";
  display: block;
  width: 2px;
  height: 4px;
  margin-left: 1px;
  border: solid #2c3f8c;
  border-width: 0 1px 1px 0;
  transform: rotate(45deg);
}
.p25 { width: 25px; }
.p30 { width: 30px; }
.p40 { width: 40px; }
.p46 { width: 46px; }
.p48 { width: 48px; }
.p75 { width: 75px; }
.p100 { width: 100px; }
.actions { display: flex; gap: 10px; height: 10px; padding: 1px 2px 0; overflow: hidden; }
.actions button {
  width: 40px;
  height: 13px;
  flex: none;
  padding-bottom: 1px;
  border: 1px solid #8fa0b4;
  background: linear-gradient(#e6edf5, #c3d0de);
}
.actions button:disabled { color: #9a9ea6; border-color: #c6c8cc; background: #dcdde0; }
```

FILE: grid.js
```js
// column title, width
const columns = [
  ['', 11], ['序号', 18], ['编码', 83], ['类别', 19], ['专业', 19], ['取费代码', 29],
  ['项目名称', 119], ['清单工作内容', 80], ['项目特征', 67], ['单位', 22], ['表达式', 32],
  ['工程量', 39], ['基价', 28], ['合价', 29], ['综合单价', 35], ['综合合价', 32],
  ['人工单价', 30], ['材料单价', 31], ['机械单价', 30], ['备注', 25], ['', 0]
];

// kind, no, code, name, extra
const rows = [
  ['unit', '', '单位工程', '', { sum: '22785...', total: '244523...' }],
  ['part', 'A1', '一', '附录A 土石方工程'],
  ['item', '1', '010101003', '挖沟槽土方', { note: '1、' }],
  ['norm', '', '01-1-1-16', '机械挖沟槽 埋深1.5m以内'],
  ['item', '2', '010101004', '挖基坑土方', { end: true }],
  ['norm', '', '01-1-1-6', '原土机械碾压'],
  ['norm', '', '01-1-1-20', '机械挖基坑 埋深3.5m以内'],
  ['part', 'A2', '二', '附录D 砌筑工程'],
  ['item', '3', '010401003', '实心砖墙', { end: true, high: true, note: '1、<br>2、' }],
  ['norm', '', '01-4-1-4', '实心砖墙 蒸压灰砂砖 1砖（240mm）[墙...'],
  ['part', 'A3', '三', '附录E 混凝土及钢筋混凝土工程'],
  ['item', '4', '010501001', '垫层'],
  ['norm', '', '01-5-1-1', '预拌混凝土（泵送） 垫层[砼等级 C15]'],
  ['norm', '', '01-17-2-39', '复合模板 垫层'],
  ['item', '5', '010501003', '独立基础'],
  ['norm', '', '01-5-1-3', '预拌混凝土（泵送） 独立基础、杯形基...'],
  ['norm', '', '01-17-2-42', '复合模板 独立基础'],
  ['item', '6', '010502001', '矩形柱', { cur: true, note: '1、' }],
  ['norm', '', '01-5-2-1', '预拌混凝土（泵送） 矩形柱[砼等级 C30]'],
  ['norm', '', '01-17-2-53', '复合模板 矩形柱'],
  ['item', '7', '010502002', '构造柱', { note: '1、' }],
  ['norm', '', '01-5-2-2', '预拌混凝土（泵送） 构造柱[砼等级 C25]'],
  ['norm', '', '01-17-2-55', '复合模板 构造柱'],
  ['item', '8', '010503001', '基础梁', { note: '1、' }],
  ['norm', '', '01-5-3-1', '预拌混凝土（泵送） 基础梁[砼等级 C30]'],
  ['norm', '', '01-17-2-60', '复合模板 基础梁'],
  ['item', '9', '010503002', '矩形梁', { note: '1、' }],
  ['norm', '', '01-5-3-2', '预拌混凝土（泵送） 矩形梁[砼等级 C30]'],
  ['norm', '', '01-17-2-61', '复合模板 矩形梁', { vals: ['m2', 'D16', '2127.500', '57.38', '12212...', '62.53', '133033.63', '37.90', '17.56', '12.07'] }],
  ['item', '10', '010505001', '有梁板', { note: '1、混凝土强度等级:C20', vals: ['m3', 'Q10', '339.500', '1461.42', '49615...', '1596.95', '542164.53', '479.06', '906.01', '76.35'] }],
  ['norm', '', '01-5-5-1', '预拌混凝土（泵送） 有梁板[砼等级 C3...', { vals: ['m3', 'D17', '340.236', '692.26', '23553...', '702.81', '239121.26', '37.28', '653.96', '1.02'] }]
];

const kinds = { unit: '项', part: '部', item: '补清', norm: '定' };

document.getElementById('cols').innerHTML = columns.map(c => c[1] ? `<col style="width:${c[1]}px">` : '<col>').join('');
document.getElementById('head').innerHTML = columns.map((c, i) =>
  `<th class="${i === 0 ? 'gut' : i === columns.length - 1 ? 'rest' : ''}">${c[0]}</th>`).join('');

// tree guides in front of the code
let lastItem = false;
function guides(kind, opt, next) {
  if (kind === 'unit') return '';
  if (kind === 'part') return '<i class="gd v"></i><i class="box"></i>';
  if (kind === 'item') {
    lastItem = !!opt.end;
    return `<i class="gd v"></i><i class="gd ${lastItem ? 'elb' : 'tee'}"></i><i class="box"></i>`;
  }
  const more = next && next[0] === 'norm';
  return `<i class="gd v"></i><i class="gd ${lastItem ? '' : 'v'}"></i><i class="gd ${more ? 'tee' : 'elb'}"></i><i class="gd h"></i>`;
}

document.getElementById('rows').innerHTML = rows.map((r, i) => {
  const [kind, no, code, name, opt = {}] = r;
  const v = opt.vals || ['', '', '', '', opt.sum || '', '', opt.total || '', '', '', ''];
  const lat = /^\d/.test(code) ? ' lat' : '';
  const trade = kind === 'item' ? 'T' : kind === 'norm' ? 'TZ' : '';
  return `<tr class="${kind}${opt.high ? ' high' : ''}">
    <td class="gut">${opt.cur ? '<i class="cur"></i>' : ''}</td>
    <td class="c n1">${no}</td>
    <td class="code${lat}"><div class="codebox">${guides(kind, opt, rows[i + 1])}<span class="t">${code}</span></div></td>
    <td class="c">${kinds[kind]}</td>
    <td class="c n1">${trade}</td>
    <td class="c n1">${kind === 'norm' ? 'TJ' : ''}</td>
    <td>${name}</td><td></td>
    <td class="${opt.cur ? 'focus' : ''}">${opt.note || ''}</td>
    <td class="c n1">${v[0]}</td><td class="c n1">${v[1]}</td>
    <td class="n">${v[2]}</td><td class="n">${v[3]}</td><td class="lat">${v[4]}</td>
    <td class="n">${v[5]}</td><td class="${kind === 'unit' ? 'lat' : 'n'}">${v[6]}</td>
    <td class="n">${v[7]}</td><td class="n">${v[8]}</td><td class="n">${v[9]}</td>
    <td></td><td class="rest"></td></tr>`;
}).join('');
```
